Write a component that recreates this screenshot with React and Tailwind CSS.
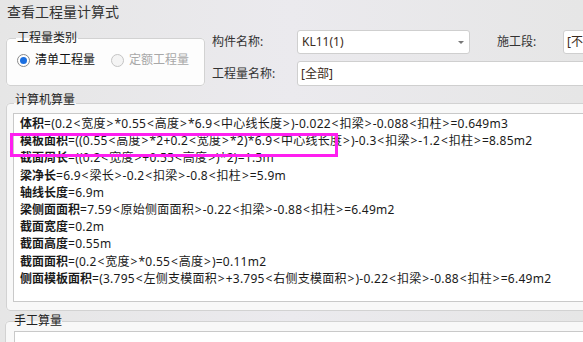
import React from 'react';

const font = { fontFamily: '"Noto Sans", "Noto Sans CJK SC", sans-serif' };

const lines = [
  ['体积', '=(0.2<宽度>*0.55<高度>*6.9<中心线长度>)-0.022<扣梁>-0.088<扣柱>=0.649m3'],
  ['模板面积', '=((0.55<高度>*2+0.2<宽度>*2)*6.9<中心线长度>)-0.3<扣梁>-1.2<扣柱>=8.85m2'],
  ['截面周长', '=((0.2<宽度>+0.55<高度>)*2)=1.5m'],
  ['梁净长', '=6.9<梁长>-0.2<扣梁>-0.8<扣柱>=5.9m'],
  ['轴线长度', '=6.9m'],
  ['梁侧面面积', '=7.59<原始侧面面积>-0.22<扣梁>-0.88<扣柱>=6.49m2'],
  ['截面宽度', '=0.2m'],
  ['截面高度', '=0.55m'],
  ['截面面积', '=(0.2<宽度>*0.55<高度>)=0.11m2'],
  ['侧面模板面积', '=(3.795<左侧支模面积>+3.795<右侧支模面积>)-0.22<扣梁>-0.88<扣柱>=6.49m2'],
];

function Radio({ checked, label }) {
  return (
    <label className="flex items-center gap-[5px] whitespace-nowrap">
      <span
        className={
          checked
            ? 'w-[13px] h-[13px] rounded-full border border-[#8a8a8a] bg-white flex items-center justify-center'
            : 'w-[13px] h-[13px] rounded-full border border-[#c4c4c4] bg-[#f4f4f4]'
        }
      >
        {checked && <span className="w-[7px] h-[7px] rounded-full bg-[#1b6fe0]" />}
      </span>
      <span className={checked ? 'text-[#111]' : 'text-[#a8a8a8]'}>{label}</span>
    </label>
  );
}

// brackets get a little air, like the original UI font
function Formula({ text }) {
  return (
    <span className="tracking-[0.25px]">
      {text.split(/([<>])/).map((part, i) =>
        part === '<' || part === '>' ? (
          <span key={i} className="px-[0.75px]">{part}</span>
        ) : (
          part
        )
      )}
    </span>
  );
}

export default function App() {
  return (
    <div
      className="relative w-[583px] h-[342px] overflow-hidden bg-gradient-to-r from-[#e6e6e6] via-[#ebeaee] to-[#e6e6e6] text-[12px] text-[#1a1a1a]"
      style={font}
    >
      {/* Title */}
      <div className="h-[30px] pt-[4px] pl-[7px] text-[14px] leading-[16px] text-[#333]">查看工程量计算式</div>

      {/* Top row */}
      <div className="flex h-[56px]">
        <fieldset className="shrink-0 ml-[6px] mt-[2px] w-[199px] h-[54px] border border-[#d2d2d2] rounded-[4px] bg-[#fdfdfd] pl-[9px]">
          <legend className="px-[1px] leading-[12px] text-[12px] text-[#222]">工程量类别</legend>
          <div className="flex items-center gap-[16px] mt-[9px] ml-[1px] leading-[14px]">
            <Radio checked label="清单工程量" />
            <Radio label="定额工程量" />
          </div>
        </fieldset>

        <div className="shrink-0 ml-[7px] flex flex-col gap-[7px]">
          <div className="flex items-center h-[24px]">
            <span className="w-[85px] text-[#333]">构件名称:</span>
            <div className="w-[173px] h-[24px] border border-[#cfcfcf] rounded-[3px] bg-white flex items-center justify-between pl-[4px] pr-[5px] text-[#3b2b20]">
              <span>KL11(1)</span>
              <span className="w-0 h-0 border-l-[3px] border-r-[3px] border-t-[3px] border-l-transparent border-r-transparent border-t-[#777]" />
            </div>
            <span className="ml-[27px] w-[66px] text-[#333]">施工段:</span>
            <div className="w-[30px] h-[24px] border border-[#cfcfcf] rounded-[3px] bg-white flex items-center pl-[3px] text-[#3b2b20] whitespace-nowrap overflow-hidden">
              [不
            </div>
          </div>
          <div className="flex items-center h-[25px]">
            <span className="w-[85px] text-[#333]">工程量名称:</span>
            <div className="w-[300px] h-[25px] border border-[#cfcfcf] rounded-[3px] bg-white flex items-center pl-[3px] text-[#3b2b20]">
              [全部]
            </div>
          </div>
        </div>
      </div>

      {/* Computer quantity */}
      <fieldset className="ml-[6px] mt-[11px] w-[600px] h-[214px] border border-[#d2d2d2] rounded-[4px] bg-[#f8f8f8] pl-[6px] pb-[8px] flex flex-col">
        <legend className="ml-[1px] px-[1px] leading-[12px] text-[12px] text-[#222] relative -top-[3px]">计算机算量</legend>
        <div className="mt-[4px] flex-1 border border-[#c9c9c9] bg-white pl-[6px] pt-[1px] leading-[17.2px] whitespace-nowrap">
          {lines.map(([k, v]) => (
            <div key={k}>
              <span className="font-bold">{k}</span>
              <Formula text={v} />
            </div>
          ))}
        </div>
      </fieldset>

      {/* Manual quantity */}
      <fieldset className="ml-[5px] mt-[4px] w-[600px] h-[40px] border border-[#d2d2d2] rounded-[4px] bg-[#f8f8f8] pl-[8px]">
        <legend className="leading-[12px] text-[12px] text-[#222]">手工算量</legend>
        <div className="mt-[4px] h-[30px] border border-[#c9c9c9] bg-white" />
      </fieldset>

      {/* Annotation highlight */}
      <div className="absolute left-[10px] top-[133px] w-[328px] h-[24px] border-[3px] border-[#ff1ef0]" />
    </div>
  );
}
